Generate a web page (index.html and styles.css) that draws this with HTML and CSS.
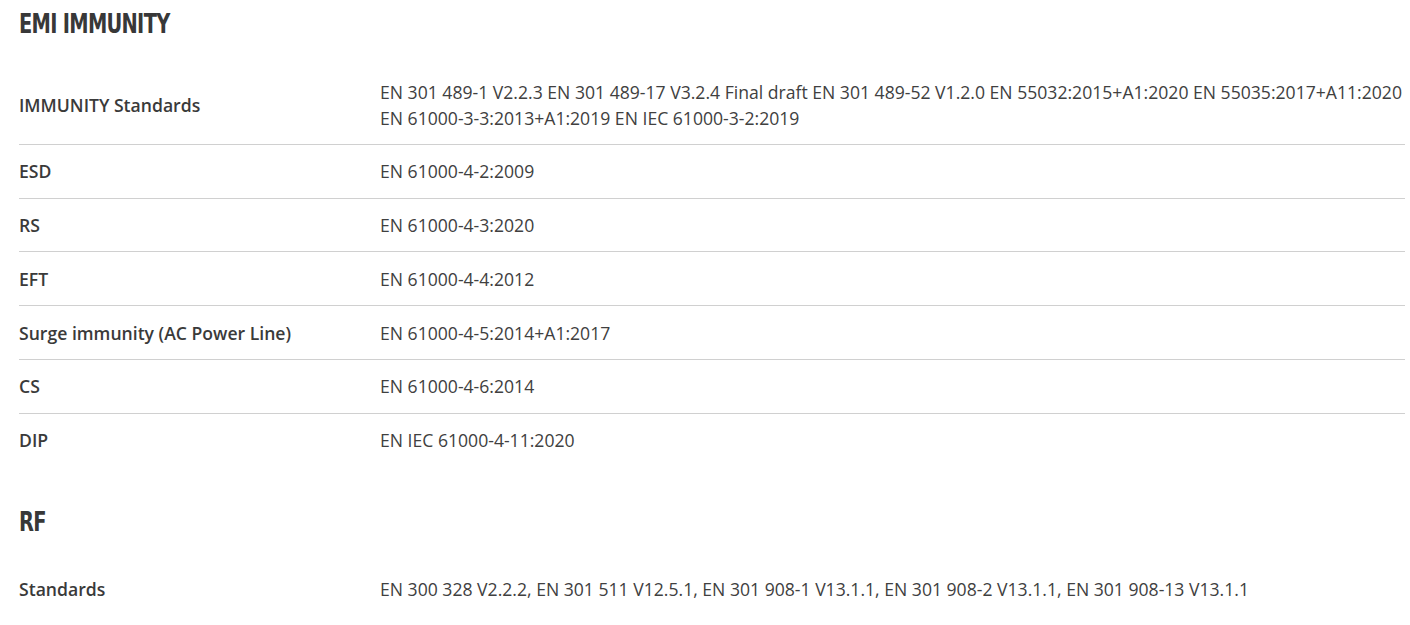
FILE: index.html
```html
<!DOCTYPE html>
<html lang="en">
<head>
    <meta charset="UTF-8">
    <meta name="viewport" content="width=device-width, initial-scale=1.0">
    <title>Compliance - EMI Immunity &amp; RF</title>
    <link rel="stylesheet" href="styles.css">
</head>
<body>
    <div class="specs">
        <section class="spec-group">
            <h2><span>EMI IMMUNITY</span></h2>
            <table class="spec-table">
                <tr>
                    <th>IMMUNITY Standards</th>
                    <td>EN 301 489-1 V2.2.3 EN 301 489-17 V3.2.4 Final draft EN 301 489-52 V1.2.0 EN 55032:2015+A1:2020 EN 55035:2017+A11:2020 EN 61000-3-3:2013+A1:2019 EN IEC 61000-3-2:2019</td>
                </tr>
                <tr>
                    <th>ESD</th>
                    <td>EN 61000-4-2:2009</td>
                </tr>
                <tr>
                    <th>RS</th>
                    <td>EN 61000-4-3:2020</td>
                </tr>
                <tr>
                    <th>EFT</th>
                    <td>EN 61000-4-4:2012</td>
                </tr>
                <tr>
                    <th>Surge immunity (AC Power Line)</th>
                    <td>EN 61000-4-5:2014+A1:2017</td>
                </tr>
                <tr>
                    <th>CS</th>
                    <td>EN 61000-4-6:2014</td>
                </tr>
                <tr>
                    <th>DIP</th>
                    <td>EN IEC 61000-4-11:2020</td>
                </tr>
            </table>
        </section>

        <section class="spec-group">
            <h2><span>RF</span></h2>
            <table class="spec-table">
                <tr>
                    <th>Standards</th>
                    <td>EN 300 328 V2.2.2, EN 301 511 V12.5.1, EN 301 908-1 V13.1.1, EN 301 908-2 V13.1.1, EN 301 908-13 V13.1.1</td>
                </tr>
            </table>
        </section>
    </div>
</body>
</html>
```

FILE: styles.css
```css
body {
    margin: 0;
    font-family: "Open Sans", "Liberation Sans", sans-serif;
    font-size: 17.6px;
    color: #404040;
    background: #fff;
}
.specs {
    padding: 0 5px 0 19px;
}
.spec-group {
    margin-bottom: 31px;
}
.spec-group h2 {
    margin: 0;
    padding-top: 3px;
    font-family: "DejaVu Sans", sans-serif;
    font-size: 27px;
    font-weight: bold;
    letter-spacing: -1px;
    line-height: 42px;
    color: #383838;
}
/* narrow the heading face to match the condensed display font */
.spec-group h2 span {
    display: inline-block;
    transform: scaleX(0.72);
    transform-origin: left center;
}
.spec-table {
    width: 100%;
    border-collapse: collapse;
    margin-top: 20px;
}
.spec-table tr {
    border-bottom: 1px solid #d0d0d0;
}
.spec-table tr:last-child {
    border-bottom: none;
}
.spec-table th,
.spec-table td {
    padding: 13.5px 0 13.3px;
    line-height: 26px;
    text-align: left;
    vertical-align: middle;
}
.spec-table th {
    width: 361px;
    font-weight: 600;
    color: #3a3a3a;
}
.spec-table td {
    font-weight: normal;
}
```
